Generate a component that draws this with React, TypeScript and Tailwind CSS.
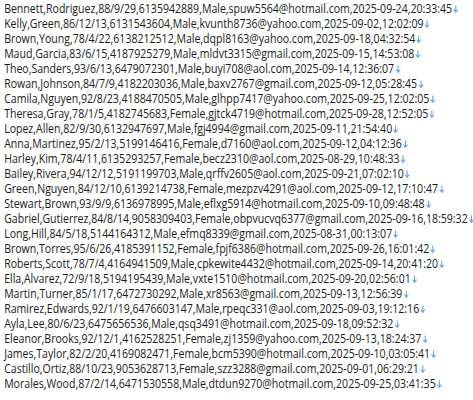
import React from "react";

const lines = [
  "Bennett,Rodriguez,88/9/29,6135942889,Male,spuw5564@hotmail.com,2025-09-24,20:33:45",
  "Kelly,Green,86/12/13,6131543604,Male,kvunth8736@yahoo.com,2025-09-02,12:02:09",
  "Brown,Young,78/4/22,6138212512,Male,dqpl8163@yahoo.com,2025-09-18,04:32:54",
  "Maud,Garcia,83/6/15,4187925279,Male,mldvt3315@gmail.com,2025-09-15,14:53:08",
  "Theo,Sanders,93/6/13,6479072301,Male,buyi708@aol.com,2025-09-14,12:36:07",
  "Rowan,Johnson,84/7/9,4182203036,Male,baxv2767@gmail.com,2025-09-12,05:28:45",
  "Camila,Nguyen,92/8/23,4188470505,Male,glhpp7417@yahoo.com,2025-09-25,12:02:05",
  "Theresa,Gray,78/1/5,4182745683,Female,gjtck4719@hotmail.com,2025-09-28,12:52:05",
  "Lopez,Allen,82/9/30,6132947697,Male,fgj4994@gmail.com,2025-09-11,21:54:40",
  "Anna,Martinez,95/2/13,5199146416,Female,d7160@aol.com,2025-09-12,04:12:36",
  "Harley,Kim,78/4/11,6135293257,Female,becz2310@aol.com,2025-08-29,10:48:33",
  "Bailey,Rivera,94/12/12,5191199703,Male,qrffv2605@aol.com,2025-09-21,07:02:10",
  "Green,Nguyen,84/12/10,6139214738,Female,mezpzv4291@aol.com,2025-09-12,17:10:47",
  "Stewart,Brown,93/9/9,6136978995,Male,eflxg5914@hotmail.com,2025-09-10,09:48:48",
  "Gabriel,Gutierrez,84/8/14,9058309403,Female,obpvucvq6377@gmail.com,2025-09-16,18:59:32",
  "Long,Hill,84/5/18,5144164312,Male,efmq8339@gmail.com,2025-08-31,00:13:07",
  "Brown,Torres,95/6/26,4185391152,Female,fpjf6386@hotmail.com,2025-09-26,16:01:42",
  "Roberts,Scott,78/7/4,4164941509,Male,cpkewite4432@hotmail.com,2025-09-14,20:41:20",
  "Ella,Alvarez,72/9/18,5194195439,Male,vxte1510@hotmail.com,2025-09-20,02:56:01",
  "Martin,Turner,85/1/17,6472730292,Male,xr8563@gmail.com,2025-09-13,12:56:39",
  "Ramirez,Edwards,92/1/19,6476603147,Male,rpeqc331@aol.com,2025-09-03,19:12:16",
  "Ayla,Lee,80/6/23,6475656536,Male,qsq3491@hotmail.com,2025-09-18,09:52:32",
  "Eleanor,Brooks,92/12/1,4162528251,Female,zj1359@yahoo.com,2025-09-13,18:24:37",
  "James,Taylor,82/2/20,4169082471,Female,bcm5390@hotmail.com,2025-09-10,03:05:41",
  "Castillo,Ortiz,88/10/23,9053628713,Female,szz3288@gmail.com,2025-09-01,06:29:21",
  "Morales,Wood,87/2/14,6471530558,Male,dtdun9270@hotmail.com,2025-09-25,03:41:35",
];

function Arrow() {
  return (
    <svg
      width="7"
      height="8"
      viewBox="0 0 7 8"
      className="inline-block ml-[1px] align-baseline"
      fill="none"
      stroke="#6aa2dc"
      strokeWidth="1.3"
    >
      <path d="M3.5 0.5 V7.2" />
      <path d="M1 4.6 L3.5 7.2 L6 4.6" />
    </svg>
  );
}

export default function App() {
  return (
    <div className="w-[473px] h-[400px] overflow-hidden bg-white">
      <div
        className="w-[600px] pl-[5px] pt-[0.5px] origin-top-left scale-x-[0.825] text-[#1a1a1a] text-[12.8px] leading-[15.04px] whitespace-nowrap"
        style={{ fontFamily: '"Open Sans", "Noto Sans", sans-serif' }}
      >
        {lines.map((l, i) => (
          <div key={i} className="h-[15.04px]">
            {l}
            <Arrow />
          </div>
        ))}
      </div>
    </div>
  );
}
